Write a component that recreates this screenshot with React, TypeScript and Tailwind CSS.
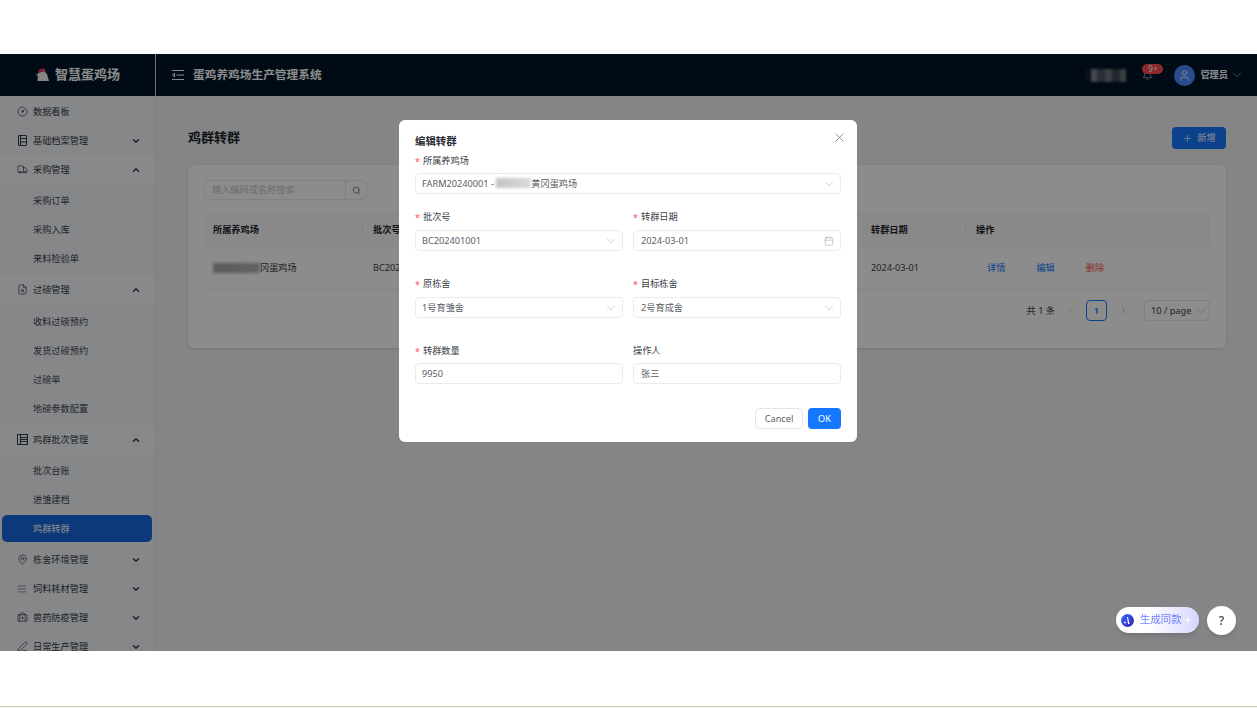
import {
  BriefcaseMedical,
  Calendar,
  ChevronDown,
  ChevronLeft,
  ChevronRight,
  ChevronUp,
  CircleGauge,
  FileSearch,
  Bell,
  AlignJustify,
  MapPin,
  PenLine,
  Plus,
  Search,
  Truck,
  User,
  X,
} from 'lucide-react'
import type { ReactNode } from 'react'

const font = { fontFamily: '"Noto Sans", "Noto Sans CJK SC", sans-serif' }

function LedgerIcon() {
  return (
    <svg width="11" height="11" viewBox="0 0 11 11" fill="none" stroke="currentColor" strokeWidth="1">
      <rect x="1.5" y="0.5" width="8" height="10" rx="0.5" />
      <path d="M3.5 0.5v10M3.5 3.5h6M3.5 7h6" />
    </svg>
  )
}

function BatchIcon() {
  return (
    <svg width="11" height="11" viewBox="0 0 11 11" fill="none" stroke="currentColor" strokeWidth="1">
      <rect x="0.5" y="0.5" width="10" height="10" />
      <path d="M3.5 0.5v10M3.5 3.5h7M3.5 5.5h7M3.5 7.5h7" />
    </svg>
  )
}

function MenuRow({ icon, label, open }: { icon: ReactNode; label: string; open?: boolean }) {
  return (
    <div className={`flex h-[29px] items-center pl-[17px] pr-[14px] text-[9.2px] text-[#333b47] ${open ? 'bg-white/40' : ''}`}>
      <span className="flex w-[16px] items-center">{icon}</span>
      <span className="flex-1">{label}</span>
      {open === undefined ? null : open ? (
        <ChevronUp size={10} strokeWidth={3.5} />
      ) : (
        <ChevronDown size={10} strokeWidth={3.5} />
      )}
    </div>
  )
}

function SubMenu({ items, active, roomy }: { items: string[]; active?: string; roomy?: boolean }) {
  return (
    <div className={roomy ? 'pt-[3px] pb-[2px]' : 'py-[2px]'}>
      {items.map((item) =>
        item === active ? (
          <div key={item} className="flex h-[29px] items-center">
            <div className="mx-[2px] flex h-[27px] w-[150px] items-center rounded-[5px] bg-[#1668dc] pl-[31px] text-[9.2px] text-white">
              {item}
            </div>
          </div>
        ) : (
          <div key={item} className="flex h-[29px] items-center pl-[33px] text-[9.2px] text-[#3f4652]">
            {item}
          </div>
        ),
      )}
    </div>
  )
}

function Sidebar() {
  const ic = { size: 11, strokeWidth: 1.5 }
  return (
    <aside className="h-full w-[156px] shrink-0 overflow-hidden border-r border-[#e4e6ea] bg-[#f4f6f9] pt-px">
      <MenuRow icon={<CircleGauge {...ic} />} label="数据看板" />
      <MenuRow icon={<LedgerIcon />} label="基础档案管理" open={false} />
      <MenuRow icon={<Truck {...ic} />} label="采购管理" open />
      <SubMenu items={['采购订单', '采购入库', '来料检验单']} />
      <MenuRow icon={<FileSearch {...ic} />} label="过磅管理" open />
      <SubMenu roomy items={['收料过磅预约', '发货过磅预约', '过磅单', '地磅参数配置']} />
      <MenuRow icon={<BatchIcon />} label="鸡群批次管理" open />
      <SubMenu items={['批次台账', '进雏建档', '鸡群转群']} active="鸡群转群" />
      <MenuRow icon={<MapPin {...ic} />} label="栋舍环境管理" open={false} />
      <MenuRow icon={<AlignJustify size={10} strokeWidth={1.25} />} label="饲料耗材管理" open={false} />
      <MenuRow icon={<BriefcaseMedical {...ic} />} label="兽药防疫管理" open={false} />
      <MenuRow icon={<PenLine {...ic} />} label="日常生产管理" open={false} />
    </aside>
  )
}

function Header() {
  return (
    <header className="flex h-[42px] items-center bg-[#001529] text-white">
      <div className="flex h-full w-[156px] shrink-0 items-center border-r border-[#c9ccd1] pl-[35px]">
        <svg width="15" height="14" viewBox="0 0 15 14" className="mr-[5px]">
          <path d="M3 5 9 3l3 3 2 7H2.500z" fill="#f2f2f2" />
          <path d="M3 4 4 1.500 7 .5l3 .5 1 2.500-3-.5-3 1.500z" fill="#f0306a" />
          <path d="M.5 7 3 5.500V8z" fill="#e8c14a" />
        </svg>
        <span className="text-[13px] font-bold tracking-normal">智慧蛋鸡场</span>
      </div>
      <div className="flex flex-1 items-center pl-[16px] pr-[13px]">
        <svg width="12" height="10" viewBox="0 0 12 10" fill="none" stroke="currentColor" strokeWidth="1" className="mr-[9px]">
          <path d="M0 .5h12M4.500 5H12M0 9.500h12M2.500 3 .5 5l2 2z" />
        </svg>
        <span className="text-[11.7px] font-semibold">蛋鸡养鸡场生产管理系统</span>
        <div className="ml-auto flex items-center">
          <div className="mr-[16px] flex h-[13px] w-[41px] blur-[1px]">
            <span className="w-[6px] bg-[#111e2c]" />
            <span className="w-[6px] bg-[#78818a]" />
            <span className="w-[8px] bg-[#4b5560]" />
            <span className="w-[7px] bg-[#6a737c]" />
            <span className="w-[8px] bg-[#3c4651]" />
            <span className="w-[6px] bg-[#68717a]" />
          </div>
          <div className="relative mr-[21px]">
            <Bell size={11} strokeWidth={1.25} />
            <span className="absolute -top-[6px] -right-[10px] flex h-[10px] w-[21px] items-center justify-center rounded-full bg-[#ff4d4f] text-[8px] leading-none text-white">
              9+
            </span>
          </div>
          <span className="mr-[5px] flex h-[21px] w-[21px] items-center justify-center rounded-full bg-[#4c8dff]">
            <User size={13} strokeWidth={1.5} />
          </span>
          <span className="mr-[2px] text-[9.2px] font-semibold">管理员</span>
          <ChevronDown size={14} strokeWidth={1.25} className="text-white/60" />
        </div>
      </div>
    </header>
  )
}

function Blur({ className }: { className: string }) {
  return <span className={`inline-block bg-gradient-to-r blur-[1.5px] ${className}`} />
}

function Content() {
  return (
    <main className="min-w-0 flex-1 bg-[#f0f2f5] pl-[32px] pr-[31px] pt-[31px]">
      <div className="flex h-[22px] items-center justify-between">
        <h1 className="text-[13px] font-bold text-[#1f2329]">鸡群转群</h1>
        <button className="flex h-[22px] w-[54px] items-center justify-center gap-[4px] rounded-[4px] bg-[#1677ff] text-[9.2px] text-white">
          <Plus size={11} strokeWidth={1.5} />
          新增
        </button>
      </div>
      <section className="mt-[16px] h-[183px] rounded-[6px] bg-white px-[16px] pt-[15px] shadow-sm">
        <div className="flex h-[20px] w-[163px] rounded-[4px] border border-[#ebebeb]">
          <div className="flex flex-1 items-center pl-[7px] text-[9.2px] text-[#c4c7cc]">输入编码或名称搜索</div>
          <div className="flex w-[21px] items-center justify-center border-l border-[#e2e4e8] text-[#666]">
            <Search size={9} strokeWidth={2} />
          </div>
        </div>
        <div className="mt-[12px] grid h-[35px] grid-cols-[159px_498px_105px_1fr] items-center rounded-t-[4px] bg-[#fafafa] text-[9.2px] font-semibold text-[#1f2329]">
          <div className="border-r border-[#ececec] pl-[9px]">所属养鸡场</div>
          <div className="pl-[10px]">批次号</div>
          <div className="border-r border-[#ececec] pl-[10px]">转群日期</div>
          <div className="pl-[10px]">操作</div>
        </div>
        <div className="grid h-[43px] grid-cols-[159px_498px_105px_1fr] items-center border-b border-[#eeeeee] text-[9.2px] text-[#3c4149]">
          <div className="flex items-center pl-[9px]">
            <Blur className="h-[10px] w-[47px] from-[#a5a5a5] to-[#b5b5b5]" />
            <span>冈蛋鸡场</span>
          </div>
          <div className="pl-[10px]">BC202401001</div>
          <div className="pl-[10px]">2024-03-01</div>
          <div className="flex gap-[31px] pl-[21px]">
            <span className="text-[#1677ff]">详情</span>
            <span className="text-[#1677ff]">编辑</span>
            <span className="text-[#ff4d4f]">删除</span>
          </div>
        </div>
        <div className="mt-[10px] flex items-center justify-end text-[9.2px] text-[#3c4149]">
          <span className="mr-[11px]">共 1 条</span>
          <ChevronLeft size={9} className="mr-[11px] text-[#c4c4c4]" />
          <span className="mr-[12px] flex h-[21px] w-[21px] items-center justify-center rounded-[4px] border border-[#1677ff] font-semibold text-[#1677ff]">
            1
          </span>
          <ChevronRight size={9} className="mr-[16px] text-[#9a9a9a]" />
          <span className="flex h-[21px] w-[66px] items-center justify-between rounded-[4px] border border-[#e8e8e8] pl-[6px] pr-[1px]">
            10 / page
            <ChevronDown size={14} strokeWidth={1.25} className="text-[#b5b5b5]" />
          </span>
        </div>
      </section>
    </main>
  )
}

function Label({ text, required }: { text: string; required?: boolean }) {
  return (
    <div className="flex h-[14px] items-center text-[9.2px] text-[#3a3f47]">
      {required && <span className="mr-[3px] text-[9px] leading-none text-[#ff4d4f]">*</span>}
      {text}
    </div>
  )
}

function Input({
  children,
  icon,
  tight,
  right,
}: {
  children: ReactNode
  icon?: 'down' | 'date'
  tight?: boolean
  right?: boolean
}) {
  return (
    <div
      className={`flex h-[21px] items-center justify-between rounded-[4px] border border-[#ebebeb] pr-[6px] text-[9.2px] text-[#595e66] ${
        tight ? 'mt-[5px]' : 'mt-[6px]'
      } ${right ? 'pl-[7px]' : 'pl-[6px]'}`}
    >
      <span className="flex items-center">{children}</span>
      {icon === 'down' && <ChevronDown size={14} strokeWidth={1} className="-mr-[2px] text-[#b0b0b0]" />}
      {icon === 'date' && <Calendar size={10} strokeWidth={1} className="text-[#8c8c8c]" />}
    </div>
  )
}

function Modal() {
  return (
    <div className="relative flex h-[322px] w-[458px] flex-col rounded-[6px] bg-white px-[16px] pt-[14px]" style={font}>
      <X size={15} strokeWidth={1.2} className="absolute right-[10px] top-[10px] text-[#777]" />
      <div className="flex h-[16px] items-center text-[10.4px] font-bold text-[#2a2e34]">编辑转群</div>
      <div className="mt-[4px]">
        <Label text="所属养鸡场" required />
        <Input icon="down" tight>
          FARM20240001 -&nbsp;
          <Blur className="h-[10px] w-[35px] from-[#c4c4c4] to-[#dadada]" />
          黄冈蛋鸡场
        </Input>
      </div>
      <div className="mt-[16px] grid grid-cols-2 gap-x-[10px]">
        <div>
          <Label text="批次号" required />
          <Input icon="down">BC202401001</Input>
        </div>
        <div>
          <Label text="转群日期" required />
          <Input icon="date" right>
            2024-03-01
          </Input>
        </div>
      </div>
      <div className="mt-[26px] grid grid-cols-2 gap-x-[10px]">
        <div>
          <Label text="原栋舍" required />
          <Input icon="down">1号育雏舍</Input>
        </div>
        <div>
          <Label text="目标栋舍" required />
          <Input icon="down" right>
            2号育成舍
          </Input>
        </div>
      </div>
      <div className="mt-[26px] grid grid-cols-2 gap-x-[10px]">
        <div>
          <Label text="转群数量" required />
          <Input tight>9950</Input>
        </div>
        <div>
          <Label text="操作人" />
          <Input tight right>
            张三
          </Input>
        </div>
      </div>
      <div className="mt-[24px] flex justify-end gap-[5px]">
        <button className="h-[21px] w-[48px] rounded-[4px] border border-[#e5e5e5] text-[9.2px] text-[#595e66]">Cancel</button>
        <button className="h-[21px] w-[33px] rounded-[4px] bg-[#1677ff] text-[9.2px] text-white">OK</button>
      </div>
    </div>
  )
}

export default function App() {
  return (
    <div className="h-[708px] overflow-hidden bg-white" style={font}>
      <div className="h-[54px]" />
      <div className="h-[597px] overflow-hidden">
        <div className="relative flex h-[597px] flex-col overflow-hidden blur-[0.35px]">
          <Header />
          <div className="flex min-h-0 flex-1">
            <Sidebar />
            <Content />
          </div>
          <div className="absolute inset-0 bg-black/45 pl-[399px] pt-[66px]">
            <Modal />
          </div>
          <div className="absolute left-[1116px] top-[553px] flex h-[26px] w-[83px] items-center rounded-full bg-gradient-to-r from-white from-40% to-[#d6d6ff] pl-[5px] shadow-md">
            <svg width="13" height="13" viewBox="0 0 13 13">
              <defs>
                <linearGradient id="genBadge" x1="0" y1="0" x2="1" y2="1">
                  <stop offset="0" stopColor="#2f6bff" />
                  <stop offset="1" stopColor="#3a1fb0" />
                </linearGradient>
              </defs>
              <circle cx="6.500" cy="6.500" r="6.500" fill="url(#genBadge)" />
              <path d="M7 3 8.500 10h-1.500L6 3z" fill="#fff" />
              <circle cx="4" cy="8.500" r="0.900" fill="#fff" />
            </svg>
            <span className="ml-[6px] text-[10.4px] text-[#6f7dff]">生成同款</span>
            <svg width="8" height="8" viewBox="0 0 8 8" className="ml-[2px]">
              <path d="M4 0 4.800 3.200 8 4 4.800 4.800 4 8 3.200 4.800 0 4 3.200 3.200z" fill="#fff" />
            </svg>
          </div>
          <div className="absolute left-[1207px] top-[552px] flex h-[29px] w-[29px] items-center justify-center rounded-full bg-white text-[12px] font-semibold text-[#555] shadow-md">
            ?
          </div>
        </div>
      </div>
      <div className="h-[55px]" />
      <div className="h-px bg-[#cfd2bf]" />
      <div className="h-px bg-[#f1f2ea]" />
    </div>
  )
}
